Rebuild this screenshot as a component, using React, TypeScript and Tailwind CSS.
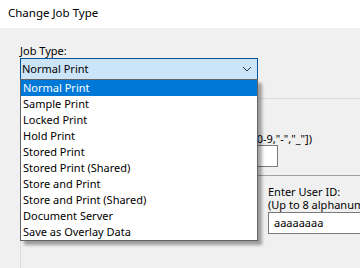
const jobTypes = [
  'Normal Print',
  'Sample Print',
  'Locked Print',
  'Hold Print',
  'Stored Print',
  'Stored Print (Shared)',
  'Store and Print',
  'Store and Print (Shared)',
  'Document Server',
  'Save as Overlay Data',
];

export default function App() {
  const selected = 'Normal Print';

  return (
    <div
      className="w-[360px] h-[268px] overflow-hidden flex flex-col bg-[#f0f0f0] text-[11px] text-black"
      style={{ fontFamily: '"Noto Sans", "Liberation Sans", sans-serif' }}
    >
      {/* Title */}
      <div className="h-[28px] shrink-0 bg-white pl-2 pt-[5px] text-[11.5px] leading-[16px]">Change Job Type</div>

      {/* Body */}
      <div className="relative flex-1 pl-5 pt-[16px]">
        <div className="leading-[14px]">Job Type:</div>
        <div className="w-[238px] h-[22px] flex items-center justify-between border border-[#005499] bg-[#cce4f7] pl-[1px] pr-[4px] leading-[16px]">
          <span>{selected}</span>
          <svg width="10" height="6" viewBox="0 0 10 6" className="mr-[1px]">
            <path d="M1 1l4 4 4-4" fill="none" stroke="#333" strokeWidth="1" />
          </svg>
        </div>

        {/* Group box behind the list */}
        <div className="mt-[18px] w-[400px] h-[200px] border-l border-t border-[#dcdcdc]">
          <div className="w-[291px] pt-[33px] text-right whitespace-nowrap leading-[14px]">
            [0-9,"-","_"])
          </div>
          <div className="w-[257px] flex justify-end mt-[-1px]">
            <div className="w-[100px] h-[22px] border border-[#7a7a7a] bg-white" />
          </div>
          <div className="mt-[8px] border-t border-[#a0a0a0]" />
          <div className="pl-[247px] pt-[9px]">
            <div className="whitespace-nowrap leading-[14px]">Enter User ID:</div>
            <div className="whitespace-nowrap leading-[14px] -mt-[1px]">(Up to 8 alphanume</div>
            <div className="w-[120px] h-[22px] border border-[#7a7a7a] bg-white pl-[5px] leading-[20px]">
              aaaaaaaa
            </div>
          </div>
        </div>

        {/* Open list */}
        <div className="absolute left-5 top-[51px] w-[238px] border border-[#646464] bg-white shadow-[4px_4px_3px_rgba(0,0,0,0.35)]">
          {jobTypes.map((t) => (
            <div
              key={t}
              className={`h-[16px] pl-[2px] leading-[16px] whitespace-nowrap ${
                t === selected ? 'bg-[#0078d7] text-white' : ''
              }`}
            >
              {t}
            </div>
          ))}
        </div>
      </div>
    </div>
  );
}
